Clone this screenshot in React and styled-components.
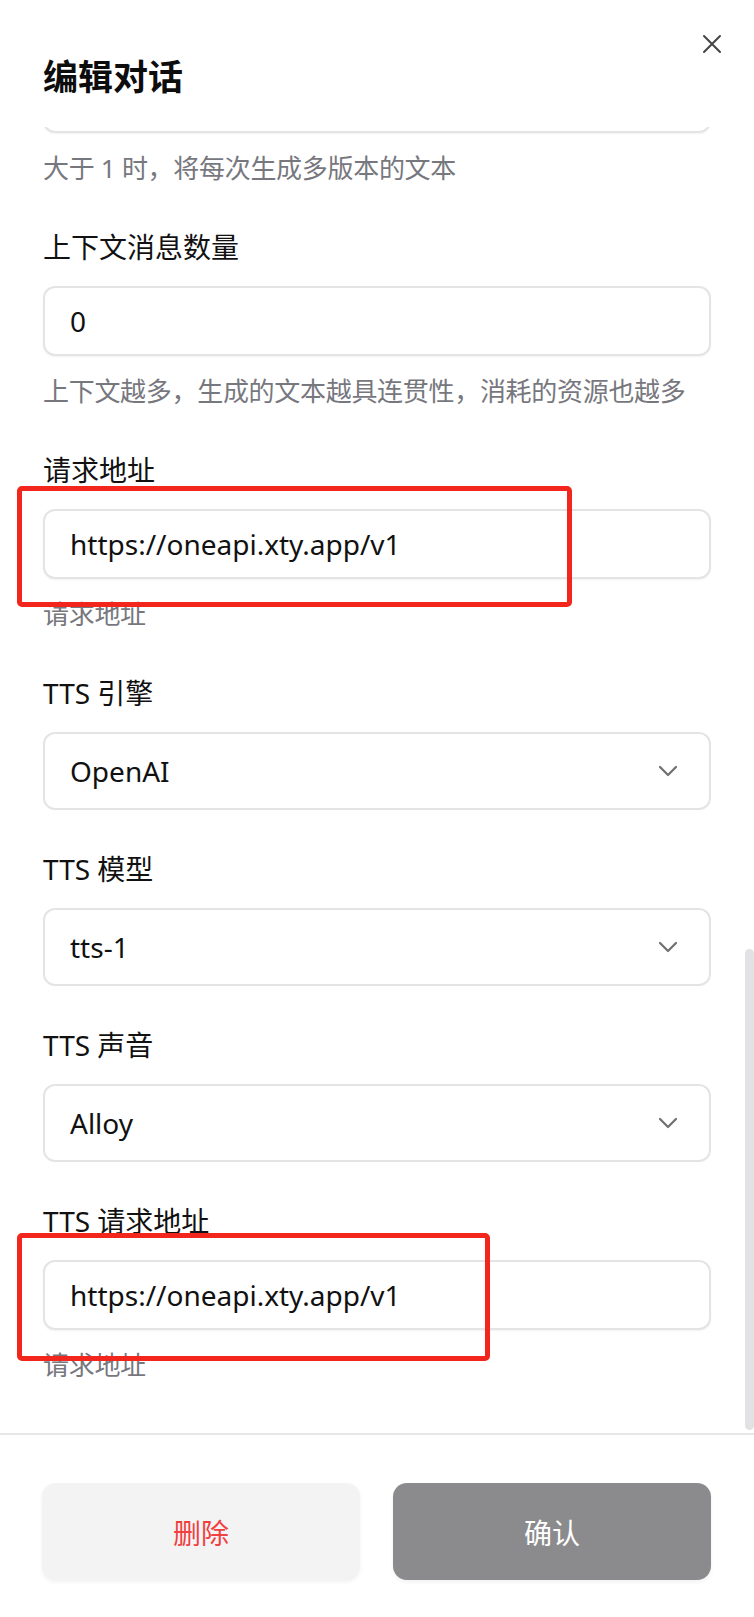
import React from 'react';
import styled, { createGlobalStyle } from 'styled-components';

const GlobalStyle = createGlobalStyle`
  html, body {
    margin: 0;
    padding: 0;
    background: #ffffff;
  }
  body {
    font-family: "Noto Sans", "Noto Sans CJK SC", sans-serif;
    color: #111111;
  }
  * {
    box-sizing: border-box;
  }
`;

const Dialog = styled.div`
  width: 754px;
  height: 1617px;
  display: flex;
  flex-direction: column;
  background: #ffffff;
`;

const Header = styled.header`
  position: relative;
  height: 127px;
  flex-shrink: 0;
  padding: 50px 43px 0;
  background: #ffffff;
  z-index: 3;
`;

const Title = styled.h2`
  margin: 0;
  font-size: 35px;
  line-height: 49px;
  font-weight: 700;
  color: #0d0d0d;
  font-family: "Noto Sans CJK SC", sans-serif;
`;

const CloseButton = styled.button`
  position: absolute;
  top: 33px;
  right: 31px;
  width: 22px;
  height: 22px;
  padding: 0;
  border: none;
  background: transparent;
  color: #444444;
  display: flex;
  align-items: center;
  justify-content: center;
`;

const BodyRow = styled.div`
  flex: 1;
  min-height: 0;
  display: flex;
`;

/* the form is scrolled to its end: content sits at the bottom, the rest is clipped above */
const Body = styled.div`
  flex: 1;
  min-width: 0;
  overflow: hidden;
  padding: 0 34px 48px 43px;
  display: flex;
  flex-direction: column;
  justify-content: flex-end;
  gap: 38px;
`;

const ScrollTrack = styled.div`
  width: 9px;
  flex-shrink: 0;
  display: flex;
  flex-direction: column;
  justify-content: flex-end;
  padding-bottom: 3px;
`;

const ScrollThumb = styled.div`
  height: ${p => p.$size}px;
  background: #e2e2e4;
  border-radius: 5px;
`;

const Field = styled.div`
  display: flex;
  flex-direction: column;
  flex-shrink: 0;
`;

const Label = styled.label`
  font-size: 28px;
  line-height: 42px;
  margin-bottom: 18px;
  color: #111111;
`;

const Control = styled.div`
  position: relative;
`;

const Input = styled.input`
  display: block;
  width: 100%;
  height: 70px;
  padding: 0 25px;
  border: 2px solid #e4e4e6;
  border-radius: 12px;
  box-shadow: 0 1px 2px rgba(0, 0, 0, 0.05);
  font-family: inherit;
  font-size: 28px;
  color: #111111;
  background: #ffffff;
  outline: none;
`;

const SelectBox = styled.div`
  height: 78px;
  padding: 0 31px 0 25px;
  border: 2px solid #e4e4e6;
  border-radius: 12px;
  display: flex;
  align-items: center;
  justify-content: space-between;
  font-size: 28px;
  color: #111111;
  background: #ffffff;
`;

const Helper = styled.div`
  margin-top: 16px;
  font-size: 26px;
  line-height: 39px;
  letter-spacing: -0.3px;
  color: #77777e;
  white-space: nowrap;
`;

const Highlight = styled.div`
  position: absolute;
  left: -26px;
  top: ${p => p.$top}px;
  width: ${p => p.$width}px;
  height: ${p => p.$height}px;
  border: 5px solid #f2261c;
  border-radius: 5px;
  pointer-events: none;
  z-index: 2;
`;

const Footer = styled.footer`
  flex-shrink: 0;
  border-top: 2px solid #e6e6e6;
  padding: 48px 43px 37px 42px;
  display: grid;
  grid-template-columns: 1fr 1fr;
  gap: 33px;
`;

const Button = styled.button`
  height: 97px;
  border: none;
  border-radius: 14px;
  font-family: "Noto Sans CJK SC", sans-serif;
  font-size: 28px;
  background: ${p => (p.$primary ? '#8b8b8d' : '#f3f3f3')};
  color: ${p => (p.$primary ? '#ffffff' : '#f0403f')};
  box-shadow: 0 2px 4px rgba(0, 0, 0, 0.06);
`;

const Chevron = () => (
  <svg width="20" height="12" viewBox="0 0 20 12" fill="none">
    <path d="M2 2l8 8 8-8" stroke="#6f6f72" strokeWidth="2.2" strokeLinecap="round" strokeLinejoin="round" />
  </svg>
);

const CloseIcon = () => (
  <svg width="20" height="20" viewBox="0 0 20 20" fill="none">
    <path d="M2 2l16 16M18 2L2 18" stroke="currentColor" strokeWidth="2" strokeLinecap="round" />
  </svg>
);

const fields = [
  { label: '生成数量', type: 'input', value: '1', helper: '大于 1 时，将每次生成多版本的文本' },
  { label: '上下文消息数量', type: 'input', value: '0', helper: '上下文越多，生成的文本越具连贯性，消耗的资源也越多' },
  { label: '请求地址', type: 'input', value: 'https://oneapi.xty.app/v1', helper: '请求地址', mark: { top: -23, width: 555, height: 121 } },
  { label: 'TTS 引擎', type: 'select', value: 'OpenAI' },
  { label: 'TTS 模型', type: 'select', value: 'tts-1' },
  { label: 'TTS 声音', type: 'select', value: 'Alloy' },
  { label: 'TTS 请求地址', type: 'input', value: 'https://oneapi.xty.app/v1', helper: '请求地址', mark: { top: -27, width: 473, height: 128 } },
];

const FormField = ({ field }) => (
  <Field>
    <Label>{field.label}</Label>
    <Control>
      {field.type === 'input' && <Input readOnly defaultValue={field.value} />}
      {field.type === 'select' && (
        <SelectBox>
          <span>{field.value}</span>
          <Chevron />
        </SelectBox>
      )}
      {field.mark && <Highlight $top={field.mark.top} $width={field.mark.width} $height={field.mark.height} />}
    </Control>
    {field.helper && <Helper>{field.helper}</Helper>}
  </Field>
);

export default function App() {
  return (
    <>
      <GlobalStyle />
      <Dialog>
        <Header>
          <Title>编辑对话</Title>
          <CloseButton aria-label="关闭">
            <CloseIcon />
          </CloseButton>
        </Header>
        <BodyRow>
          <Body>
            {fields.map(field => (
              <FormField key={field.label} field={field} />
            ))}
          </Body>
          <ScrollTrack>
            <ScrollThumb $size={481} />
          </ScrollTrack>
        </BodyRow>
        <Footer>
          <Button>删除</Button>
          <Button $primary>确认</Button>
        </Footer>
      </Dialog>
    </>
  );
}
